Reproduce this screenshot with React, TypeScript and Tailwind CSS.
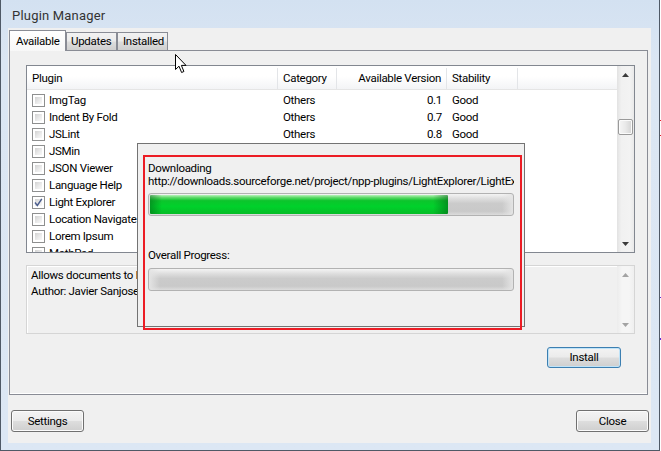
import React from "react";

type Row = { name: string; cat: string; ver: string; st: string; checked?: boolean };

const rows: Row[] = [
  { name: "ImgTag", cat: "Others", ver: "0.1", st: "Good" },
  { name: "Indent By Fold", cat: "Others", ver: "0.7", st: "Good" },
  { name: "JSLint", cat: "Others", ver: "0.8", st: "Good" },
  { name: "JSMin", cat: "Others", ver: "1.1", st: "Good" },
  { name: "JSON Viewer", cat: "Others", ver: "1.2", st: "Good" },
  { name: "Language Help", cat: "Others", ver: "1.6", st: "Good" },
  { name: "Light Explorer", cat: "Others", ver: "1.6.3", st: "Good", checked: true },
  { name: "Location Navigate", cat: "Others", ver: "0.4", st: "Good" },
  { name: "Lorem Ipsum", cat: "Others", ver: "1.0", st: "Good" },
  { name: "MathPad", cat: "Others", ver: "1.0", st: "Good" },
];

function CheckBox({ checked }: { checked?: boolean }) {
  return (
    <span className="flex h-[13px] w-[13px] shrink-0 border border-[#8e8f8f] bg-white p-[2px]">
      <span className="relative flex-1 bg-[linear-gradient(135deg,#d2d2d2,#ececec_60%,#f8f8f8)]">
        {checked && (
          <svg viewBox="0 0 9 9" className="absolute -left-[1px] -top-[1px] h-[9px] w-[9px]">
            <path d="M1 4.6 L3.3 7.4 L7.8 0.8" fill="none" stroke="#4c5e8e" strokeWidth="1.5" />
          </svg>
        )}
      </span>
    </span>
  );
}

function ScrollArrow({ up, color }: { up?: boolean; color: string }) {
  return (
    <svg viewBox="0 0 7 4" className="h-[4px] w-[7px]">
      <path d={up ? "M3.5 0 L7 4 L0 4 Z" : "M0 0 L7 0 L3.5 4 Z"} fill={color} />
    </svg>
  );
}

function ProgressBar({ fill }: { fill: number }) {
  return (
    <div className="relative h-[23px] w-[366px] overflow-hidden rounded-[3px] border border-[#b2b2b2] bg-[linear-gradient(to_right,#e4e4e4,transparent_3%,transparent_97%,#e4e4e4),linear-gradient(to_bottom,#f4f4f4,#dedede_22%,#cbcbcb_45%,#c9c9c9_82%,#dcdcdc)] p-[1px]">
      {fill > 0 && (
        <div
          className="h-full rounded-[1px] bg-[linear-gradient(to_right,rgba(0,90,20,0.45),transparent_4%,transparent_95%,rgba(0,90,20,0.5)),linear-gradient(to_bottom,#b8f2ba,#5ad866_14%,#0cc52c_30%,#00d12b_60%,#06bd27)]"
          style={{ width: fill }}
        />
      )}
    </div>
  );
}

const btn =
  "flex items-center justify-center rounded-[3px] border bg-[linear-gradient(to_bottom,#f3f3f3,#ebebeb_48%,#dddddd_52%,#cfcfcf)] text-[11.5px] text-black";

export default function App() {
  return (
    <div className="relative h-[451px] w-[661px] overflow-hidden bg-white font-[Roboto,sans-serif] text-[11.5px] leading-[17px] tracking-[-0.3px] text-black">
      {/* window */}
      <div className="flex h-[451px] w-[660px] flex-col border-x border-b border-[#4f5966] bg-[linear-gradient(to_bottom,#d3e1f1,#dbe6f3_60px,#dce7f4)] pb-[7px] pl-[7px] pr-[8px]">
        <div className="flex h-[28px] items-center pl-[4px] pt-[3px] text-[13px] tracking-[0.2px] text-[#333]">Plugin Manager</div>

        {/* client */}
        <div className="flex flex-1 flex-col bg-[#f0f0f0]">
          {/* tabs */}
          <div className="ml-[1px] mt-[2px] flex h-[20px] items-end">
            <div className="relative z-10 -mb-[1px] flex h-[21px] w-[57px] items-start border-x border-t border-[#898c95] bg-[linear-gradient(to_bottom,#ffffff,#f7f7f7)] pl-[6px] pt-[2px]">
              Available
            </div>
            <div className="flex h-[18px] w-[51px] items-start border-x border-t border-[#898c95] bg-[linear-gradient(to_bottom,#f2f2f2,#ebebeb_48%,#dddddd_52%,#cfcfcf)] pl-[4px]">
              Updates
            </div>
            <div className="flex h-[18px] w-[51px] items-start border-x border-t border-[#898c95] bg-[linear-gradient(to_bottom,#f2f2f2,#ebebeb_48%,#dddddd_52%,#cfcfcf)] pl-[5px]">
              Installed
            </div>
          </div>

          {/* panel */}
          <div className="ml-[1px] flex h-[345px] w-[639px] flex-col border border-[#898c95] bg-[#f0f0f0] pl-[16px] pr-[12px] pt-[14px] shadow-[inset_0_-1px_0_#fff]">
            {/* list */}
            <div className="flex h-[188px] border border-[#828790] bg-white">
              <div className="flex flex-1 flex-col overflow-hidden">
                <div className="flex h-[24px] shrink-0 border-b border-[#e5e5e5] bg-[linear-gradient(to_bottom,#ffffff,#ffffff_45%,#f3f4f6)] pt-[2px]">
                  <div className="flex w-[251px] items-center border-r border-[#e3e5e8] pl-[5px]">Plugin</div>
                  <div className="flex w-[59px] items-center border-r border-[#e3e5e8] pl-[5px]">Category</div>
                  <div className="flex w-[110px] items-center justify-end border-r border-[#e3e5e8] pr-[5px]">Available Version</div>
                  <div className="flex w-[71px] items-center border-r border-[#e3e5e8] pl-[5px]">Stability</div>
                </div>
                <div className="flex flex-col pt-[2px]">
                  {rows.map((r) => (
                    <div key={r.name} className="flex h-[17px] shrink-0 items-center">
                      <div className="flex w-[251px] items-center gap-[4px] pl-[5px]">
                        <CheckBox checked={r.checked} />
                        <span className="whitespace-nowrap">{r.name}</span>
                      </div>
                      <div className="w-[59px] pl-[5px]">{r.cat}</div>
                      <div className="w-[110px] pr-[5px] text-right">{r.ver}</div>
                      <div className="w-[71px] pl-[5px]">{r.st}</div>
                    </div>
                  ))}
                </div>
              </div>
              {/* scrollbar */}
              <div className="flex w-[17px] flex-col bg-[linear-gradient(to_right,#e2e2e2,#f1f1f1_25%,#f3f3f3_75%,#e9e9e9)]">
                <div className="flex h-[17px] items-center justify-center">
                  <ScrollArrow up color="#3b3b3b" />
                </div>
                <div className="mx-[1px] mt-[36px] h-[16px] rounded-[2px] border border-[#9a9a9a] bg-[linear-gradient(to_right,#f6f6f6,#e9e9e9_50%,#d4d4d4)] shadow-[inset_0_0_0_1px_#fbfbfb]" />
                <div className="flex-1" />
                <div className="flex h-[17px] items-center justify-center">
                  <ScrollArrow color="#3b3b3b" />
                </div>
              </div>
            </div>

            {/* description */}
            <div className="mt-[12px] flex h-[69px] border border-[#d5d5d5] bg-[#f0f0f0] shadow-[inset_1px_1px_0_#ffffff]">
              <div className="flex-1 overflow-hidden whitespace-nowrap pl-[4px] pt-[1px] leading-[16px]">
                <div>Allows documents to be browsed and opened from an explorer panel</div>
                <div>Author: Javier Sanjose</div>
              </div>
              <div className="flex w-[17px] flex-col bg-[linear-gradient(to_right,#ececec,#f5f5f5_30%,#f5f5f5_70%,#efefef)]">
                <div className="flex h-[17px] items-center justify-center">
                  <ScrollArrow up color="#a3a3a3" />
                </div>
                <div className="flex-1" />
                <div className="flex h-[17px] items-center justify-center">
                  <ScrollArrow color="#a3a3a3" />
                </div>
              </div>
            </div>

            <div className="mt-[13px] flex justify-end pr-[14px]">
              <div className={`${btn} h-[21px] w-[74px] border-[#3c7fb1] shadow-[inset_0_0_0_1px_#bfe3f8]`}>Install</div>
            </div>
          </div>

          {/* bottom buttons */}
          <div className="mt-[15px] flex justify-between pl-[3px] pr-[2px]">
            <div className={`${btn} h-[22px] w-[73px] border-[#707070] shadow-[inset_0_0_0_1px_#fbfbfb]`}>Settings</div>
            <div className={`${btn} h-[22px] w-[73px] border-[#707070] shadow-[inset_0_0_0_1px_#fbfbfb]`}>Close</div>
          </div>
        </div>
      </div>

      {/* desktop marks at far right */}
      <div className="absolute left-[660px] top-[120px] h-[1px] w-[1px] bg-[#e0202a]" />
      <div className="absolute left-[660px] top-[135px] h-[1px] w-[1px] bg-[#e0202a]" />
      <div className="absolute left-[660px] top-[297px] h-[1px] w-[1px] bg-[#6a2bd8]" />
      <div className="absolute left-[660px] top-[338px] h-[2px] w-[1px] bg-[#6a2bd8]" />

      {/* mouse cursor */}
      <svg className="absolute left-[175px] top-[54px] h-[20px] w-[13px]" viewBox="0 0 13 20">
        <path d="M0.5 0.5 L0.5 15.5 L4 12.2 L6.6 18.5 L8.9 17.5 L6.4 11.4 L11 11.4 Z" fill="#fff" stroke="#000" strokeWidth="1" />
      </svg>

      {/* progress dialog */}
      <div className="absolute left-[137px] top-[143px] flex h-[184px] w-[388px] flex-col border border-[#737373] bg-[#f0f0f0] pl-[10px] pt-[18px] leading-[13px]">
        <div>Downloading</div>
        <div className="w-[366px] overflow-hidden whitespace-nowrap">
          http://downloads.sourceforge.net/project/npp-plugins/LightExplorer/LightExplorer_1_6_3_UNI_dll.zip
        </div>
        <div className="mt-[5px]">
          <ProgressBar fill={298} />
        </div>
        <div className="mt-[33px]">Overall Progress:</div>
        <div className="mt-[6px]">
          <ProgressBar fill={0} />
        </div>
      </div>

      {/* red highlight */}
      <div className="absolute left-[143px] top-[155px] h-[175px] w-[379px] border-2 border-[#ec1c24]" />
    </div>
  );
}
